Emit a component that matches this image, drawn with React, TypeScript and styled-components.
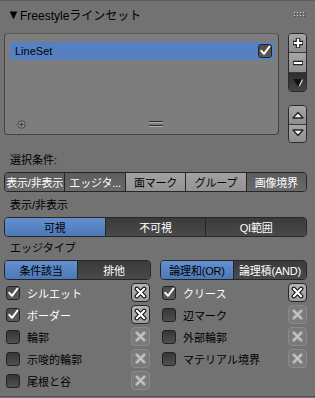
import React from 'react';
import styled, { createGlobalStyle } from 'styled-components';

const GlobalStyle = createGlobalStyle`
  html, body {
    margin: 0;
    padding: 0;
    background: #727272;
  }
  body {
    font-family: "Liberation Sans", "Noto Sans CJK JP", sans-serif;
    font-size: 11px;
    color: #000;
  }
`

const Panel = styled.div`
  width: 315px;
  height: 397px;
  box-sizing: border-box;
  background: #727272;
  border-top: 1px solid #5c5c5c;
  border-bottom: 1px solid #555;
  overflow: hidden;
`

const Header = styled.div`
  height: 26px;
  display: flex;
  align-items: center;
  padding: 0 10px 0 7px;
  font-size: 12px;
  color: #000;
`

const Triangle = styled.span`
  font-size: 13px;
  width: 13px;
  line-height: 1;
`

const Title = styled.span`
  flex: 1;
`

const Body = styled.div`
  padding: 0 8px 0 4px;
`

const ListRow = styled.div`
  display: flex;
  justify-content: space-between;
  margin-top: 6px;
  height: 110px;
`

const ListBox = styled.div`
  width: 275px;
  height: 102px;
  box-sizing: border-box;
  border: 1px solid #444;
  border-top-color: #5a5a5a;
  border-radius: 4px;
  background: #7d7d7d;
  padding: 8px 4px 0 5px;
  display: flex;
  flex-direction: column;
`

const ListItem = styled.div`
  height: 18px;
  background: #5680c2;
  display: flex;
  align-items: center;
  justify-content: space-between;
  padding: 0 2px 0 5px;
  color: #000;
  font-size: 11px;
`

const ListFooter = styled.div`
  margin-top: auto;
  height: 20px;
  display: flex;
  align-items: center;
  position: relative;
  padding-left: 7px;
`

const Grip = styled.div`
  position: absolute;
  left: 139px;
  top: 7px;
  width: 14px;
  height: 5px;
  border-top: 1px solid #2a2a2a;
  border-bottom: 1px solid #2a2a2a;
  box-shadow: inset 0 1px 0 #b0b0b0, 0 1px 0 #b0b0b0;
  box-sizing: border-box;
`

const SideColumn = styled.div`
  width: 19px;
  display: flex;
  flex-direction: column;
  gap: 13px;
`

const SideGroup = styled.div`
  display: flex;
  flex-direction: column;
  border: 1px solid #2a2a2a;
  border-radius: 4px;
  overflow: hidden;
`

const SideButton = styled.div<{ $dark?: boolean; $h: number }>`
  height: ${p => p.$h}px;
  display: flex;
  align-items: center;
  justify-content: center;
  background: ${p => p.$dark ? 'linear-gradient(#2e2e2e, #454545)' : 'linear-gradient(#a6a6a6, #8e8e8e)'};
  & + & {
    border-top: 1px solid #3a3a3a;
  }
`

const SectionLabel = styled.div<{ $mt: number }>`
  margin-top: ${p => p.$mt}px;
  height: 22px;
  line-height: 22px;
  padding-left: 6px;
  color: #000;
`

const Segmented = styled.div<{ $mt?: number }>`
  display: flex;
  height: 20px;
  margin-top: ${p => p.$mt ?? 1}px;
  border: 1px solid #262626;
  border-radius: 4px;
  overflow: hidden;
  box-sizing: border-box;
  flex: 1;
`

const Segment = styled.div<{ $kind: 'on' | 'off' | 'blue' | 'dark' }>`
  flex: 1;
  display: flex;
  align-items: center;
  justify-content: center;
  white-space: nowrap;
  overflow: hidden;
  font-size: 11px;
  letter-spacing: -0.2px;
  background: ${p =>
    p.$kind === 'blue' ? 'linear-gradient(#6590d0, #4d78b8)'
    : p.$kind === 'dark' ? 'linear-gradient(#3a3a3a, #4a4a4a)'
    : p.$kind === 'on' ? 'linear-gradient(#5c5c5c, #6a6a6a)'
    : 'linear-gradient(#a2a2a2, #939393)'};
  color: ${p => (p.$kind === 'dark' || p.$kind === 'on') ? '#fff' : '#000'};
  & + & {
    border-left: 1px solid #262626;
  }
`

const PairRow = styled.div`
  display: flex;
  gap: 9px;
  margin-top: 1px;
  height: 19px;
`

const CheckGrid = styled.div`
  display: grid;
  grid-template-columns: 146px 148px;
  column-gap: 9px;
  row-gap: 3px;
  margin-top: 4px;
`

const CheckRow = styled.div<{ $right?: boolean }>`
  height: 19px;
  display: flex;
  align-items: center;
  padding-left: ${p => p.$right ? 3 : 2}px;
`

const CheckLabel = styled.span<{ $on: boolean }>`
  margin-left: 7px;
  flex: 1;
  color: ${p => p.$on ? '#fff' : '#000'};
`

const Box = styled.div<{ $on: boolean }>`
  width: 14px;
  height: 14px;
  box-sizing: border-box;
  border: 1px solid #222;
  border-radius: 3px;
  background: ${p => p.$on ? 'linear-gradient(#4c4c4c, #5a5a5a)' : 'linear-gradient(#363636, #505050)'};
  display: flex;
  align-items: center;
  justify-content: center;
  flex-shrink: 0;
`

const XButton = styled.div<{ $on: boolean }>`
  width: 19px;
  height: 19px;
  box-sizing: border-box;
  border-radius: 4px;
  border: 1px solid ${p => p.$on ? '#262626' : '#8a8a8a'};
  background: ${p => p.$on ? 'linear-gradient(#b4b4b4, #9c9c9c)' : '#7a7a7a'};
  display: flex;
  align-items: center;
  justify-content: center;
`

const Check = () => (
  <svg width="12" height="12" viewBox="0 0 12 12">
    <path d="M2.3 5.8 L5 8.8 L10.5 1.5" fill="none" stroke="#fff" strokeWidth="2" strokeLinejoin="round" strokeLinecap="round" />
  </svg>
)

const XIcon = ({ on }: { on: boolean }) => (
  <svg width="13" height="13" viewBox="0 0 13 13">
    <path d="M2.8 2.8 L10.2 10.2 M10.2 2.8 L2.8 10.2" stroke={on ? '#111' : '#8a8a8a'} strokeWidth="4.4" strokeLinecap="round" />
    <path d="M2.8 2.8 L10.2 10.2 M10.2 2.8 L2.8 10.2" stroke={on ? '#fff' : '#c4c4c4'} strokeWidth="2.2" strokeLinecap="round" />
  </svg>
)

const PlusIcon = () => (
  <svg width="14" height="14" viewBox="0 0 14 14">
    <path d="M7 2 V12 M2 7 H12" stroke="#222" strokeWidth="4.4" />
    <path d="M7 2.8 V11.2 M2.8 7 H11.2" stroke="#fff" strokeWidth="2.2" />
  </svg>
)

const MinusIcon = () => (
  <svg width="14" height="14" viewBox="0 0 14 14">
    <path d="M2 7 H12" stroke="#222" strokeWidth="4.4" />
    <path d="M2.8 7 H11.2" stroke="#fff" strokeWidth="2.2" />
  </svg>
)

const MenuIcon = () => (
  <svg width="12" height="12" viewBox="0 0 12 12">
    <path d="M1.5 3 H10.5 L7 10 H5.5 Z" fill="#111" />
    <path d="M10.5 3.5 L7.3 10" stroke="#e0e0e0" strokeWidth="1.2" />
  </svg>
)

const Arrow = ({ up }: { up: boolean }) => (
  <svg width="14" height="10" viewBox="0 0 14 10">
    <path d={up ? 'M2 8 L7 2.5 L12 8 Z' : 'M2 2 L7 7.5 L12 2 Z'} fill="#fff" stroke="#222" strokeWidth="1.3" strokeLinejoin="round" />
  </svg>
)

const Dots = () => (
  <svg width="11" height="5" viewBox="0 0 11 5">
    {[0, 3, 6, 9].map(x => (
      <g key={x}>
        <rect x={x} y={0} width="1" height="1" fill="#d0d0d0" />
        <rect x={x} y={3} width="1" height="1" fill="#d0d0d0" />
        <rect x={x + 1} y={1} width="1" height="1" fill="#4a4a4a" />
        <rect x={x + 1} y={4} width="1" height="1" fill="#4a4a4a" />
      </g>
    ))}
  </svg>
)

const AddCircle = () => (
  <svg width="9" height="9" viewBox="0 0 9 9">
    <circle cx="4.5" cy="4.5" r="3.8" fill="#8a8a8a" stroke="#444" strokeWidth="0.9" />
    <path d="M4.5 2.4 V6.6 M2.4 4.5 H6.6" stroke="#333" strokeWidth="0.9" />
  </svg>
)

const left = [
  { label: 'シルエット', on: true },
  { label: 'ボーダー', on: true },
  { label: '輪郭', on: false },
  { label: '示唆的輪郭', on: false },
  { label: '尾根と谷', on: false },
]

const right = [
  { label: 'クリース', on: true },
  { label: '辺マーク', on: false },
  { label: '外部輪郭', on: false },
  { label: 'マテリアル境界', on: false },
]

const selectTabs: { label: string; on: boolean }[] = [
  { label: '表示/非表示', on: true },
  { label: 'エッジタ...', on: true },
  { label: '面マーク', on: false },
  { label: 'グループ', on: false },
  { label: '画像境界', on: true },
]

export default function App() {
  return (
    <>
      <GlobalStyle />
      <Panel>
        <Header>
          <Triangle>▼</Triangle>
          <Title>Freestyleラインセット</Title>
          <Dots />
        </Header>
        <Body>
          <ListRow>
            <ListBox>
              <ListItem>
                <span>LineSet</span>
                <Box $on={true}><Check /></Box>
              </ListItem>
              <ListFooter>
                <AddCircle />
                <Grip />
              </ListFooter>
            </ListBox>
            <SideColumn>
              <SideGroup>
                <SideButton $h={19}><PlusIcon /></SideButton>
                <SideButton $h={19}><MinusIcon /></SideButton>
                <SideButton $h={19} $dark><MenuIcon /></SideButton>
              </SideGroup>
              <SideGroup>
                <SideButton $h={18}><Arrow up /></SideButton>
                <SideButton $h={18}><Arrow up={false} /></SideButton>
              </SideGroup>
            </SideColumn>
          </ListRow>

          <SectionLabel $mt={6}>選択条件:</SectionLabel>
          <Segmented>
            {selectTabs.map(t => (
              <Segment key={t.label} $kind={t.on ? 'on' : 'off'}>{t.label}</Segment>
            ))}
          </Segmented>

          <SectionLabel $mt={2}>表示/非表示</SectionLabel>
          <Segmented>
            <Segment $kind="blue">可視</Segment>
            <Segment $kind="dark">不可視</Segment>
            <Segment $kind="dark">QI範囲</Segment>
          </Segmented>

          <SectionLabel $mt={0}>エッジタイプ</SectionLabel>
          <PairRow>
            <Segmented $mt={0}>
              <Segment $kind="blue">条件該当</Segment>
              <Segment $kind="dark">排他</Segment>
            </Segmented>
            <Segmented $mt={0}>
              <Segment $kind="blue">論理和(OR)</Segment>
              <Segment $kind="dark">論理積(AND)</Segment>
            </Segmented>
          </PairRow>

          <CheckGrid>
            {left.map((l, i) => (
              <React.Fragment key={l.label}>
                <CheckRow>
                  <Box $on={l.on}>{l.on && <Check />}</Box>
                  <CheckLabel $on={l.on}>{l.label}</CheckLabel>
                  <XButton $on={l.on}><XIcon on={l.on} /></XButton>
                </CheckRow>
                {right[i] ? (
                  <CheckRow $right>
                    <Box $on={right[i].on}>{right[i].on && <Check />}</Box>
                    <CheckLabel $on={right[i].on}>{right[i].label}</CheckLabel>
                    <XButton $on={right[i].on}><XIcon on={right[i].on} /></XButton>
                  </CheckRow>
                ) : <div />}
              </React.Fragment>
            ))}
          </CheckGrid>
        </Body>
      </Panel>
    </>
  )
}
